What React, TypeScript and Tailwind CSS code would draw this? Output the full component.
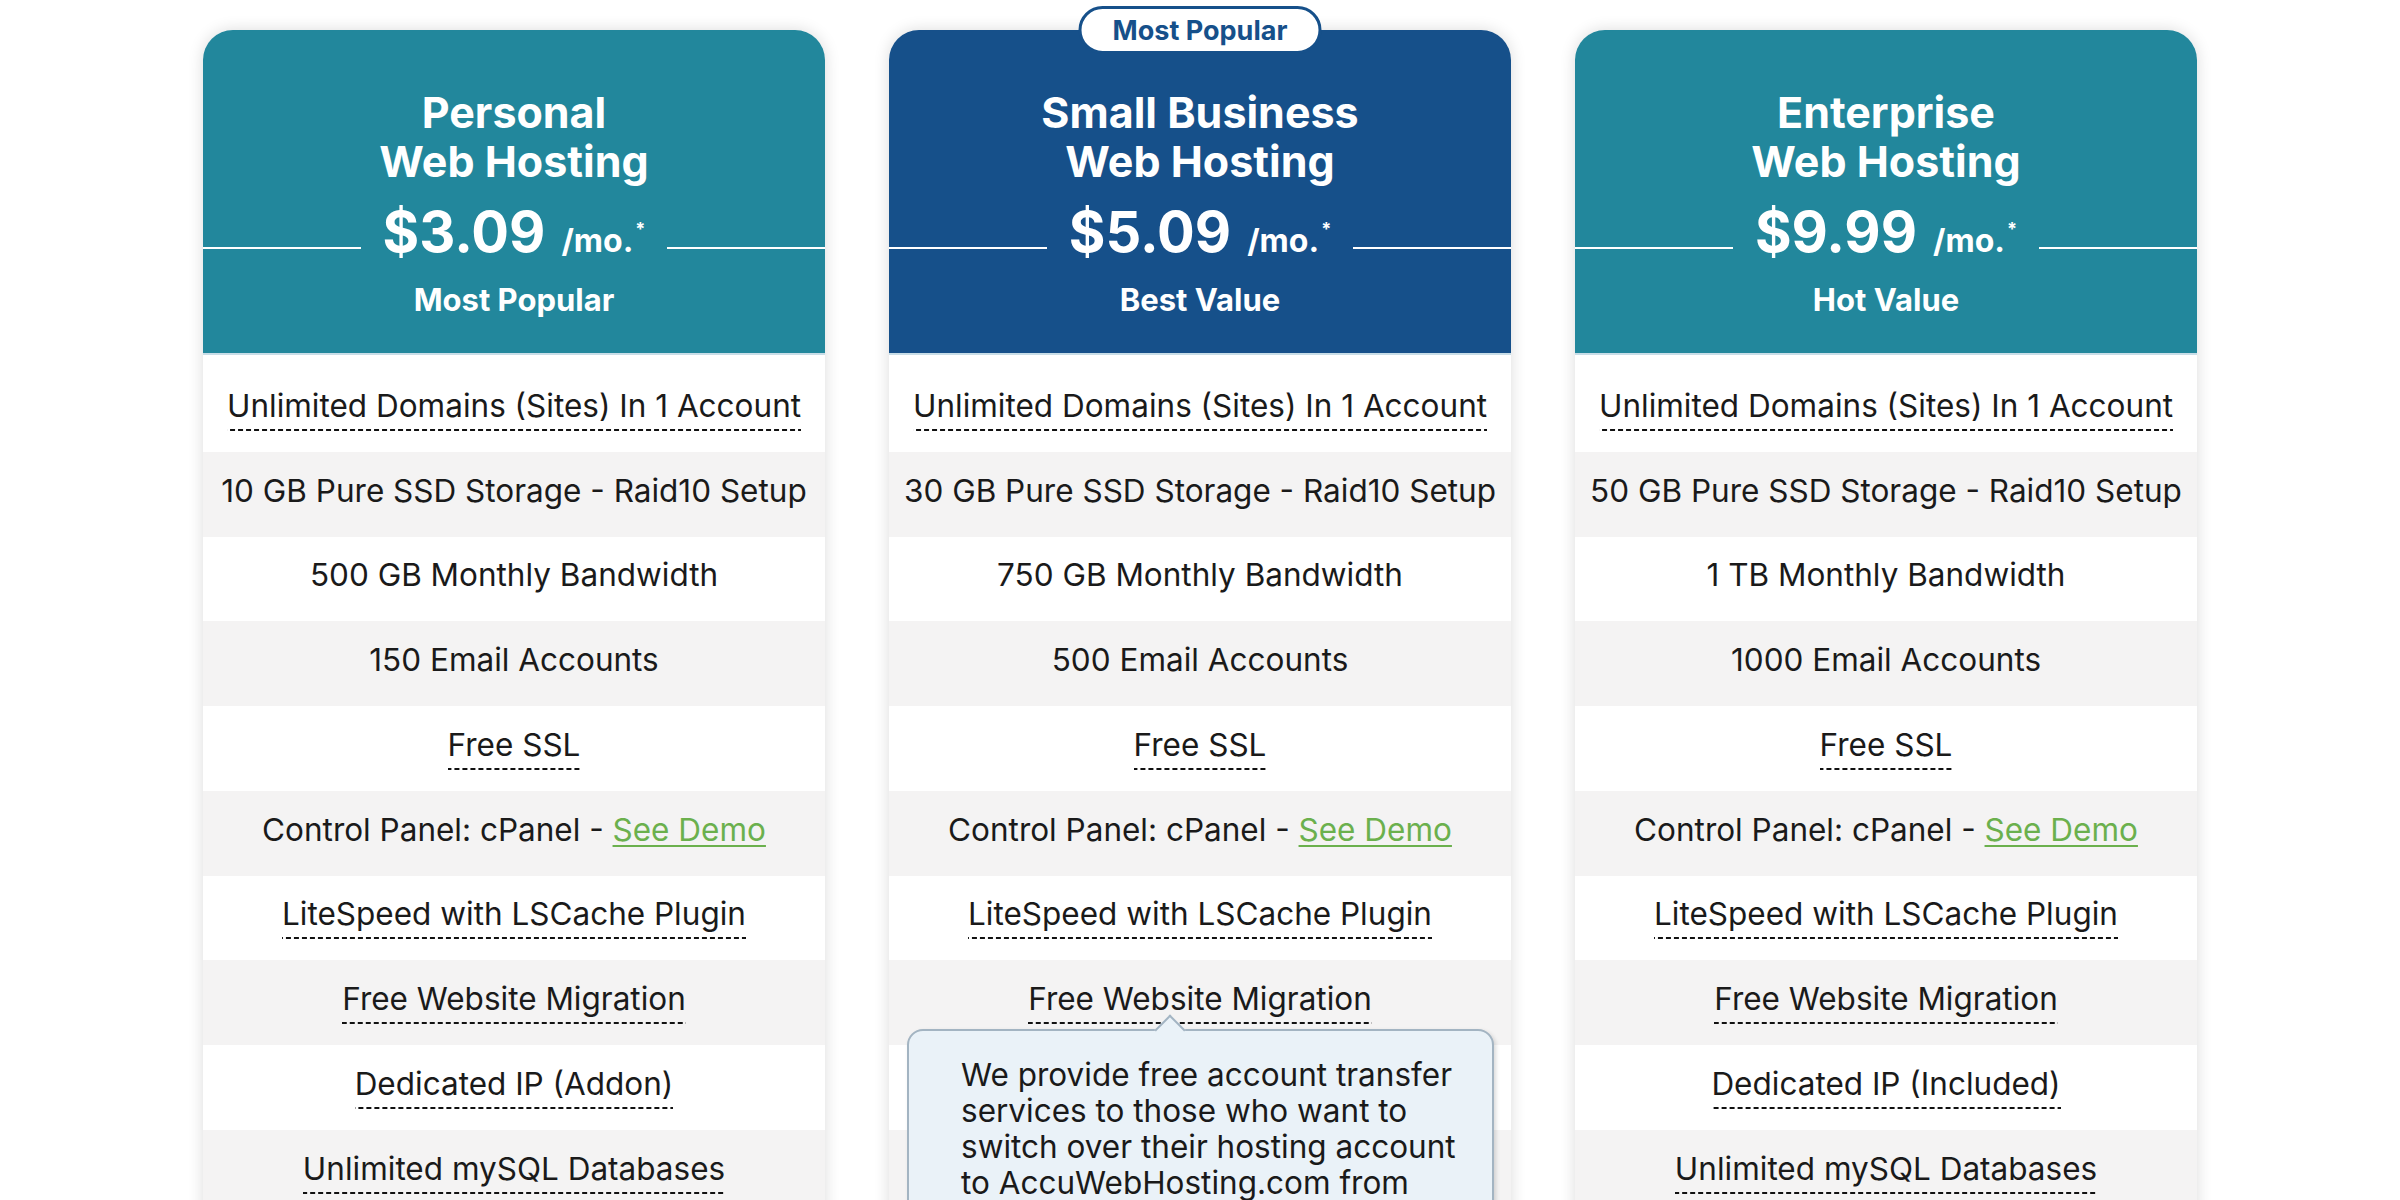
import React from "react";

type Feature = { text: string; dashed?: boolean; demo?: boolean };

type Plan = {
  title1: string;
  price: string;
  label: string;
  header: string;
  features: Feature[];
  popular?: boolean;
};

const mk = (storage: string, bw: string, email: string, ip: string): Feature[] => [
  { text: "Unlimited Domains (Sites) In 1 Account", dashed: true },
  { text: storage },
  { text: bw },
  { text: email },
  { text: "Free SSL", dashed: true },
  { text: "Control Panel: cPanel - ", demo: true },
  { text: "LiteSpeed with LSCache Plugin", dashed: true },
  { text: "Free Website Migration", dashed: true },
  { text: ip, dashed: true },
  { text: "Unlimited mySQL Databases", dashed: true },
  { text: "Unlimited FTP Accounts", dashed: true },
];

const plans: Plan[] = [
  {
    title1: "Personal",
    price: "$3.09",
    label: "Most Popular",
    header: "bg-[#22879c]",
    features: mk(
      "10 GB Pure SSD Storage - Raid10 Setup",
      "500 GB Monthly Bandwidth",
      "150 Email Accounts",
      "Dedicated IP (Addon)"
    ),
  },
  {
    title1: "Small Business",
    price: "$5.09",
    label: "Best Value",
    header: "bg-[#16508a]",
    popular: true,
    features: mk(
      "30 GB Pure SSD Storage - Raid10 Setup",
      "750 GB Monthly Bandwidth",
      "500 Email Accounts",
      "Dedicated IP (Addon)"
    ),
  },
  {
    title1: "Enterprise",
    price: "$9.99",
    label: "Hot Value",
    header: "bg-[#22879c]",
    features: mk(
      "50 GB Pure SSD Storage - Raid10 Setup",
      "1 TB Monthly Bandwidth",
      "1000 Email Accounts",
      "Dedicated IP (Included)"
    ),
  },
];

function Row({ f, i }: { f: Feature; i: number }) {
  return (
    <div
      className={
        "h-[84.75px] flex items-center justify-center " +
        (i % 2 === 1 ? "bg-[#f4f3f3]" : "bg-white")
      }
    >
      <span
        className={
          "text-[31.5px] leading-[36px] pb-[7px] text-[#1a1a1a] whitespace-nowrap " +
          (f.dashed
            ? "bg-[linear-gradient(to_right,#111_64%,transparent_64%)] bg-[length:8px_2px] bg-repeat-x bg-bottom"
            : "")
        }
      >
        {f.text}
        {f.demo && (
          <a className="text-[#6bb04d] underline decoration-[1.5px] underline-offset-[4px]">
            See Demo
          </a>
        )}
      </span>
    </div>
  );
}

function Card({ p }: { p: Plan }) {
  return (
    <div className="relative w-[622px] shrink-0">
      {p.popular && (
        <div className="absolute left-1/2 -translate-x-1/2 top-[-24px] z-20 w-[243px] h-[48px] rounded-full border-[3px] border-[#16508a] bg-white flex items-center justify-center">
          <span className="text-[27px] font-bold text-[#16508a] leading-none mt-[1px]">Most Popular</span>
        </div>
      )}
      <div className="rounded-t-[30px] overflow-hidden shadow-[0_0_16px_rgba(0,0,0,0.14)]">
        <div
          className={
            p.header +
            " h-[325px] border-b-2 border-[#c8dde7] flex flex-col items-center text-white pt-[58px]"
          }
        >
          <div className="text-[43px] leading-[49px] font-bold text-center">
            {p.title1}
            <br />
            Web Hosting
          </div>
          <div className="w-full flex items-start mt-[20px]">
            <div className="flex-1 h-[2px] bg-white mt-[41px]" />
            <div className="flex items-start px-[22px]">
              <span className="text-[56px] leading-[52px] font-bold">{p.price}</span>
              <span className="text-[32px] leading-[34px] font-bold ml-[16px] mt-[18px]">/mo.</span>
              <span className="text-[18px] leading-none font-bold mt-[14px] ml-[2px]">*</span>
            </div>
            <div className="flex-1 h-[2px] bg-white mt-[41px]" />
          </div>
          <div className="text-[31px] leading-[36px] font-bold mt-[24px]">{p.label}</div>
        </div>
        <div className="bg-white pt-[12px]">
          {p.features.map((f, i) => (
            <Row key={i} f={f} i={i} />
          ))}
        </div>
      </div>
      {p.popular && (
        <div className="absolute z-30 left-[18px] right-[17px] top-[999px] h-[260px] rounded-[16px] border-2 border-[#a3b4c2] bg-[#eaf2f8] shadow-[2px_2px_4px_rgba(0,0,0,0.15)] pl-[52px] pt-[26px]">
          <div className="absolute left-[250px] top-[-12px] w-[22px] h-[22px] rotate-45 bg-[#eaf2f8] border-l-2 border-t-2 border-[#a3b4c2]" />
          <p className="text-[31.5px] leading-[36px] text-[#1a1a1a] whitespace-nowrap">
            We provide free account transfer
            <br />
            services to those who want to
            <br />
            switch over their hosting account
            <br />
            to AccuWebHosting.com from
            <br />
            another hosting provider.
          </p>
        </div>
      )}
    </div>
  );
}

export default function App() {
  return (
    <div
      className="w-[2400px] h-[1200px] overflow-hidden bg-white"
      style={{ fontFamily: "Inter, Lato, sans-serif" }}
    >
      <div className="flex justify-center gap-[64px] pt-[30px]">
        {plans.map((p, i) => (
          <Card key={i} p={p} />
        ))}
      </div>
    </div>
  );
}
